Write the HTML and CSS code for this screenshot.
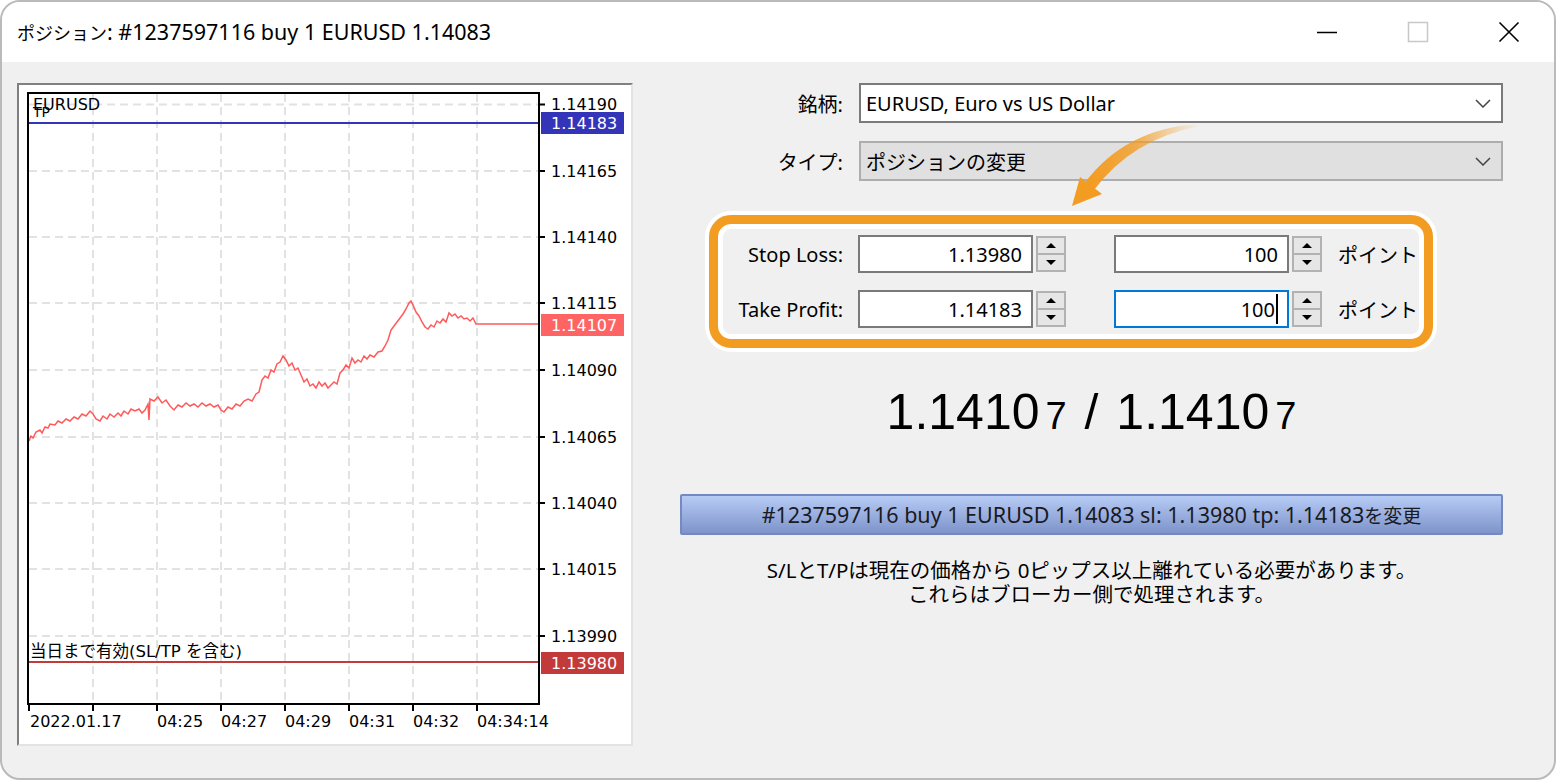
FILE: index.html
```html
<!DOCTYPE html>
<html lang="ja">
<head>
    <meta charset="UTF-8">
    <meta name="viewport" content="width=device-width, initial-scale=1.0">
    <title>ポジション</title>
    <link rel="stylesheet" href="styles.css">
</head>
<body>
    <div class="window">
        <div class="titlebar">
            <span class="title"><span class="ja">ポジション</span>: #1237597116 buy 1 EURUSD 1.14083</span>
            <div class="controls">
                <span class="ctl"><svg width="22" height="22" viewBox="0 0 22 22"><line x1="1" y1="11.5" x2="21" y2="11.5" stroke="#000" stroke-width="1.5"/></svg></span>
                <span class="ctl"><svg width="22" height="22" viewBox="0 0 22 22"><rect x="1.5" y="1.5" width="19" height="19" fill="none" stroke="#c8c8c8" stroke-width="1.5"/></svg></span>
                <span class="ctl"><svg width="22" height="22" viewBox="0 0 22 22"><path d="M1.5 1.5 L20.5 20.5 M20.5 1.5 L1.5 20.5" stroke="#000" stroke-width="1.6"/></svg></span>
            </div>
        </div>

        <div class="content">
            <div class="chart-panel">
                <svg class="chart" width="612" height="659" viewBox="19 85 612 659">
                    <!-- grid -->
                    <g class="grid">
                        <line x1="29" y1="104.5" x2="539" y2="104.5"/>
                        <line x1="29" y1="171" x2="539" y2="171"/>
                        <line x1="29" y1="237" x2="539" y2="237"/>
                        <line x1="29" y1="303" x2="539" y2="303"/>
                        <line x1="29" y1="370" x2="539" y2="370"/>
                        <line x1="29" y1="437" x2="539" y2="437"/>
                        <line x1="29" y1="503" x2="539" y2="503"/>
                        <line x1="29" y1="569" x2="539" y2="569"/>
                        <line x1="29" y1="636" x2="539" y2="636"/>
                        <line x1="93" y1="94" x2="93" y2="704"/>
                        <line x1="157" y1="94" x2="157" y2="704"/>
                        <line x1="221" y1="94" x2="221" y2="704"/>
                        <line x1="285" y1="94" x2="285" y2="704"/>
                        <line x1="349" y1="94" x2="349" y2="704"/>
                        <line x1="413" y1="94" x2="413" y2="704"/>
                        <line x1="477" y1="94" x2="477" y2="704"/>
                    </g>

                    <!-- price line -->
                    <polyline class="price-line" points="29,441 31,436 33,438 36,432 40,430 42,433 45,427 48,428 50,424 55,425 58,421 62,423 66,419 70,421 74,417 78,419 82,414 86,416 90,411 93,414 96,419 100,421 103,416 107,419 110,414 114,417 118,413 121,416 124,411 128,414 131,409 135,411 139,409 142,413 145,410 148,404 149,420 150,399 154,401 158,397 162,403 166,400 170,406 174,410 178,405 182,407 186,403 190,406 194,404 198,407 202,403 206,406 210,404 214,407 218,405 221,410 224,412 228,407 232,409 236,404 240,406 244,401 248,399 252,401 256,394 259,392 262,380 265,376 268,378 271,370 274,372 277,364 280,362 283,356 286,360 289,366 292,363 295,370 298,368 301,375 304,382 307,379 310,386 313,384 316,388 319,382 322,386 325,383 328,388 331,385 334,382 337,384 340,373 343,370 346,365 349,368 352,358 355,363 358,360 361,362 364,356 367,359 370,355 374,357 378,352 382,351 385,346 388,340 391,330 394,326 397,322 400,318 403,314 406,309 409,303 411,301 413,305 416,312 419,316 422,322 425,327 428,329 431,325 434,327 437,321 440,323 443,319 446,322 449,313 452,316 455,314 458,318 461,316 464,319 467,318 470,321 473,318 476,324 540,324"/>

                    <!-- tp / sl lines -->
                    <line x1="28" y1="123" x2="540" y2="123" stroke="#3434b8" stroke-width="2"/>
                    <line x1="28" y1="662" x2="540" y2="662" stroke="#c23a3a" stroke-width="2"/>

                    <!-- frame -->
                    <rect x="28" y="93" width="511" height="611" fill="none" stroke="#000" stroke-width="2"/>

                    <!-- axis ticks -->
                    <g class="ticks">
                        <line x1="540" y1="104.5" x2="545" y2="104.5"/>
                        <line x1="540" y1="171" x2="545" y2="171"/>
                        <line x1="540" y1="237" x2="545" y2="237"/>
                        <line x1="540" y1="303" x2="545" y2="303"/>
                        <line x1="540" y1="370" x2="545" y2="370"/>
                        <line x1="540" y1="437" x2="545" y2="437"/>
                        <line x1="540" y1="503" x2="545" y2="503"/>
                        <line x1="540" y1="569" x2="545" y2="569"/>
                        <line x1="540" y1="636" x2="545" y2="636"/>
                        <line x1="29" y1="705" x2="29" y2="711"/>
                        <line x1="93" y1="705" x2="93" y2="711"/>
                        <line x1="157" y1="705" x2="157" y2="711"/>
                        <line x1="221" y1="705" x2="221" y2="711"/>
                        <line x1="285" y1="705" x2="285" y2="711"/>
                        <line x1="349" y1="705" x2="349" y2="711"/>
                        <line x1="413" y1="705" x2="413" y2="711"/>
                        <line x1="477" y1="705" x2="477" y2="711"/>
                    </g>

                    <!-- price axis -->
                    <g class="axis">
                        <text x="551" y="110">1.14190</text>
                        <text x="551" y="177">1.14165</text>
                        <text x="551" y="243">1.14140</text>
                        <text x="551" y="309">1.14115</text>
                        <text x="551" y="376">1.14090</text>
                        <text x="551" y="443">1.14065</text>
                        <text x="551" y="509">1.14040</text>
                        <text x="551" y="575">1.14015</text>
                        <text x="551" y="642">1.13990</text>
                    </g>

                    <rect x="541" y="112" width="83" height="22" fill="#3434b8"/>
                    <text class="axis tag" x="551" y="129">1.14183</text>
                    <rect x="541" y="314" width="83" height="22" fill="#ff6464"/>
                    <text class="axis tag" x="551" y="331">1.14107</text>
                    <rect x="541" y="652" width="83" height="22" fill="#c23a3a"/>
                    <text class="axis tag" x="551" y="669">1.13980</text>

                    <!-- time axis -->
                    <g class="axis">
                        <text x="30" y="727">2022.01.17</text>
                        <text x="157" y="727">04:25</text>
                        <text x="221" y="727">04:27</text>
                        <text x="285" y="727">04:29</text>
                        <text x="349" y="727">04:31</text>
                        <text x="413" y="727">04:32</text>
                        <text x="477" y="727">04:34:14</text>
                    </g>

                    <text class="axis" x="33" y="110">EURUSD</text>
                    <text class="axis tp" x="33" y="117">TP</text>
                    <text class="axis note" x="30" y="657">当日まで有効(SL/TP を含む)</text>
                </svg>
            </div>

            <div class="form">
                <div class="field">
                    <label>銘柄:</label>
                    <div class="select">
                        <span>EURUSD, Euro vs US Dollar</span>
                        <svg width="16" height="9" viewBox="0 0 16 9"><path d="M1 1 L8 8 L15 1" fill="none" stroke="#444" stroke-width="1.5"/></svg>
                    </div>
                </div>
                <div class="field">
                    <label>タイプ:</label>
                    <div class="select select-grey">
                        <span>ポジションの変更</span>
                        <svg width="16" height="9" viewBox="0 0 16 9"><path d="M1 1 L8 8 L15 1" fill="none" stroke="#444" stroke-width="1.5"/></svg>
                    </div>
                </div>

                <div class="highlight">
                    <div class="row">
                        <label>Stop Loss:</label>
                        <div class="input">1.13980</div>
                        <div class="spin"><span class="up"></span><span class="down"></span></div>
                        <div class="input input-gap">100</div>
                        <div class="spin"><span class="up"></span><span class="down"></span></div>
                        <span class="unit">ポイント</span>
                    </div>
                    <div class="row">
                        <label>Take Profit:</label>
                        <div class="input">1.14183</div>
                        <div class="spin"><span class="up"></span><span class="down"></span></div>
                        <div class="input input-gap input-focus">100<span class="caret"></span></div>
                        <div class="spin"><span class="up"></span><span class="down"></span></div>
                        <span class="unit">ポイント</span>
                    </div>
                </div>

                <div class="price">1.1410<small>7</small> / 1.1410<small>7</small></div>

                <button class="modify">#1237597116 buy 1 EURUSD 1.14083 sl: 1.13980 tp: 1.14183<span class="ja">を変更</span></button>

                <p class="notice">S/LとT/Pは現在の価格から 0ピップス以上離れている必要があります。<br>これらはブローカー側で処理されます。</p>
            </div>

            <svg class="arrow" width="150" height="100" viewBox="1060 115 150 100">
                <defs>
                    <linearGradient id="fade" x1="1200" y1="0" x2="1090" y2="0" gradientUnits="userSpaceOnUse">
                        <stop offset="0" stop-color="#f39c22" stop-opacity="0"/>
                        <stop offset="0.6" stop-color="#f39c22" stop-opacity="0.8"/>
                        <stop offset="1" stop-color="#f39c22"/>
                    </linearGradient>
                </defs>
                <path d="M1200 124 Q1125 128 1084 184 L1094 190 Q1132 139 1200 126 Z" fill="url(#fade)"/>
                <polygon points="1072,206 1080,177 1102,194" fill="#f39c22"/>
            </svg>
        </div>
    </div>
</body>
</html>
```

FILE: styles.css
```css
html {
    background-color: #ffffff;
}

body {
    margin: 0;
    padding: 0;
    font-family: "Noto Sans", "Noto Sans CJK JP", sans-serif;
    color: #000;
}

.window {
    width: 1556px;
    height: 780px;
    box-sizing: border-box;
    border: 2px solid #bababa;
    border-radius: 20px;
    overflow: hidden;
    background-color: #f0f0f0;
    display: flex;
    flex-direction: column;
}

/* title bar */
.titlebar {
    height: 60px;
    background-color: #ffffff;
    display: flex;
    align-items: center;
    justify-content: space-between;
    flex-shrink: 0;
}

.title {
    padding-left: 15px;
    padding-bottom: 2px;
    font-size: 21.5px;
}

.title .ja {
    font-size: 18px;
}

.controls {
    display: flex;
}

.ctl {
    width: 91px;
    height: 60px;
    display: flex;
    align-items: center;
    justify-content: center;
}

/* content */
.content {
    flex: 1;
    display: flex;
    position: relative;
}

.chart-panel {
    width: 616px;
    height: 663px;
    box-sizing: border-box;
    margin: 21px 0 0 15px;
    border-style: solid;
    border-width: 2px;
    border-color: #808080 #e3e3e3 #e3e3e3 #808080;
    background-color: #ffffff;
}

.chart {
    display: block;
}

.chart .grid line {
    stroke: #e2e2e2;
    stroke-width: 2;
    stroke-dasharray: 8 5;
}

.chart .ticks line {
    stroke: #000;
    stroke-width: 2;
}

.chart .axis {
    font-family: "DejaVu Sans", sans-serif;
    font-size: 16px;
    fill: #000;
}

.chart .tag {
    fill: #ffffff;
}

.chart .tp {
    font-size: 14px;
}

.chart .note {
    font-family: "DejaVu Sans", "Noto Sans CJK JP", sans-serif;
    font-size: 16.5px;
}

.price-line {
    fill: none;
    stroke: #ff5a5a;
    stroke-width: 1.5;
}

/* form */
.form {
    width: 823px;
    margin-left: 47px;
    padding-top: 21px;
    font-size: 20px;
}

.field {
    display: flex;
    align-items: center;
    height: 40px;
    margin-bottom: 18px;
}

.field label {
    width: 163px;
    text-align: right;
    margin-right: 16px;
}

.select {
    flex: 1;
    height: 40px;
    box-sizing: border-box;
    border: 2px solid #7a7a7a;
    background-color: #ffffff;
    display: flex;
    align-items: center;
    justify-content: space-between;
    padding: 0 10px 0 5px;
}

.select-grey {
    background-color: #e0e0e0;
    border-color: #adadad;
}

.highlight {
    width: 724px;
    margin: 34px 0 0 29px;
    box-sizing: border-box;
    border: 9px solid #f39c22;
    border-radius: 22px;
    box-shadow: 0 0 0 4px #ffffff, inset 0 0 0 5px #ffffff;
    padding: 11px 0;
    display: flex;
    flex-direction: column;
    gap: 17px;
}

.row {
    display: flex;
    align-items: center;
    height: 38px;
}

.row label {
    width: 125px;
    text-align: right;
    margin-right: 15px;
}

.input {
    width: 175px;
    height: 38px;
    box-sizing: border-box;
    border: 2px solid #7a7a7a;
    background-color: #ffffff;
    display: flex;
    align-items: center;
    justify-content: flex-end;
    padding-right: 9px;
}

.input-gap {
    margin-left: 48px;
}

.input-focus {
    border-color: #0078d7;
}

.caret {
    width: 2px;
    height: 30px;
    background-color: #000;
    margin-left: 1px;
}

.spin {
    width: 30px;
    height: 36px;
    margin-left: 3px;
    box-sizing: border-box;
    border: 2px solid #b2b2b2;
    background-color: #e6e6e6;
    display: flex;
    flex-direction: column;
}

.spin span {
    flex: 1;
    display: flex;
    align-items: center;
    justify-content: center;
}

.spin .up {
    border-bottom: 2px solid #b2b2b2;
}

.spin .up::after {
    content: "";
    border-left: 5px solid transparent;
    border-right: 5px solid transparent;
    border-bottom: 5px solid #000;
}

.spin .down::after {
    content: "";
    border-left: 5px solid transparent;
    border-right: 5px solid transparent;
    border-top: 5px solid #000;
}

.unit {
    margin-left: 16px;
}

.price {
    margin-top: 24px;
    height: 80px;
    line-height: 80px;
    text-align: center;
    font-family: "Liberation Sans", sans-serif;
    font-size: 50px;
    word-spacing: 4px;
}

.price small {
    font-size: 38px;
    margin-left: 6px;
}

.modify {
    display: block;
    width: 823px;
    height: 41px;
    margin-top: 42px;
    border: 2px solid #7389c0;
    border-radius: 2px;
    background: linear-gradient(#b6cbf4, #7e94cb);
    font-family: "Noto Sans", "Noto Sans CJK JP", sans-serif;
    font-size: 21.5px;
    color: #1a1a22;
    padding: 0;
}

.modify .ja {
    font-size: 19px;
}

.notice {
    margin: 23px 0 0;
    text-align: center;
    line-height: 24px;
    font-size: 20.5px;
}

.arrow {
    position: absolute;
    left: 1058px;
    top: 53px;
}
```
